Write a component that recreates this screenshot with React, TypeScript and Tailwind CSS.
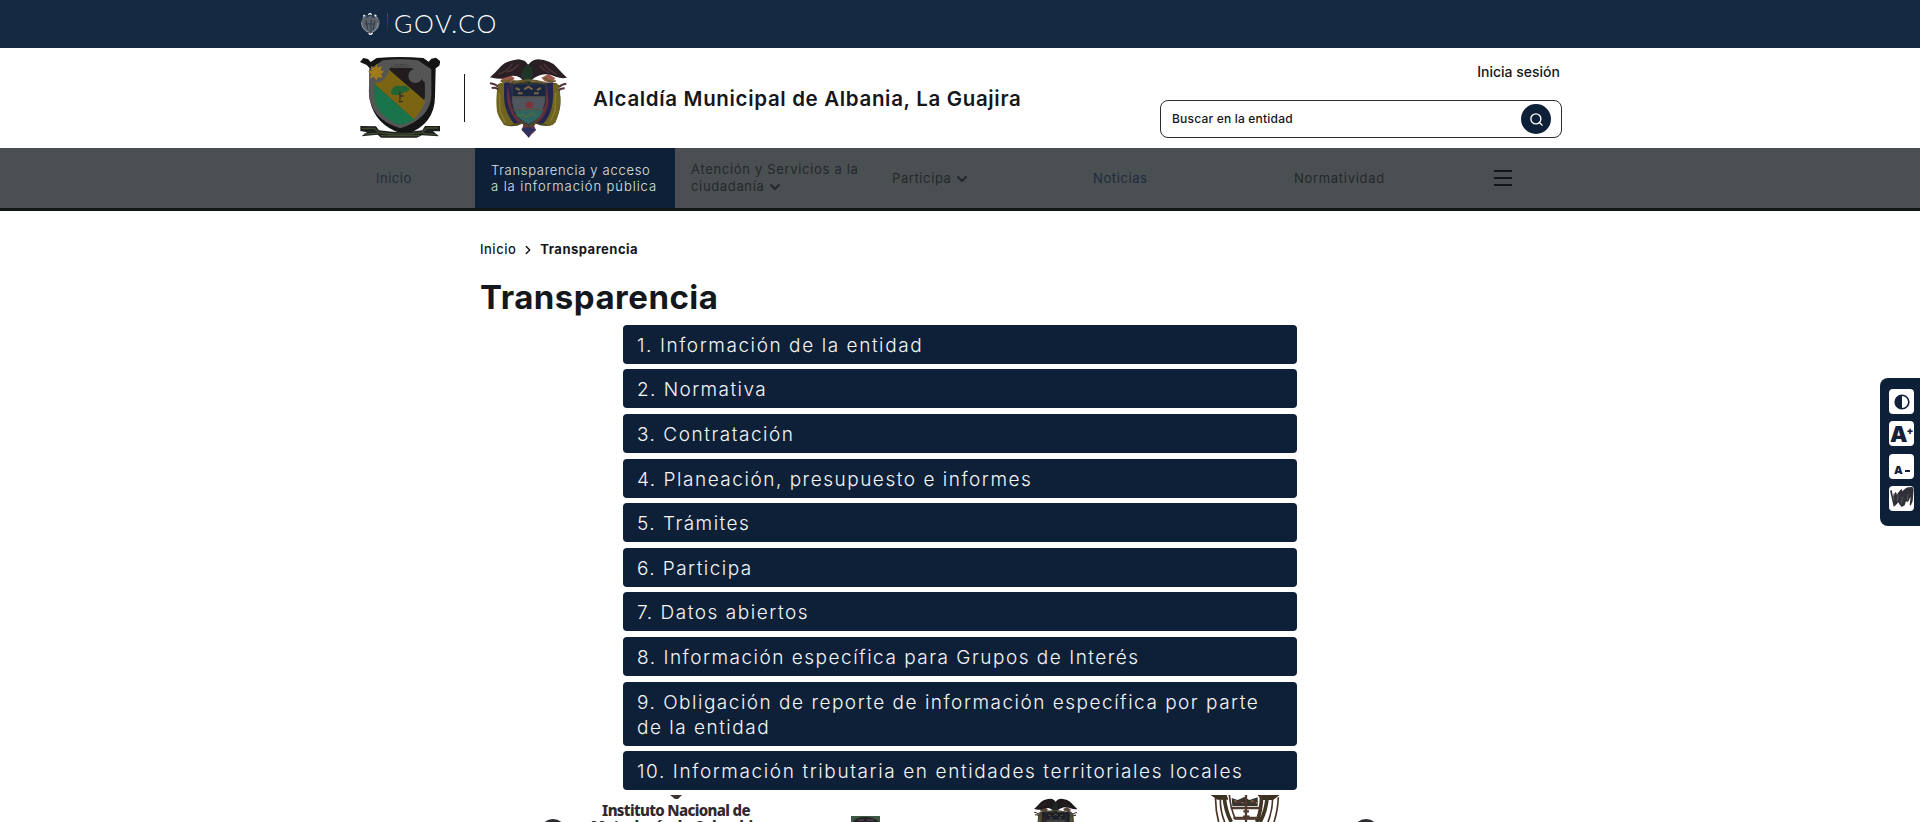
import { ChevronDown, ChevronRight, Search } from "lucide-react";

const sections = [
  { label: "1. Información de la entidad", tracking: "tracking-[1.57px]" },
  { label: "2. Normativa", tracking: "tracking-[1.42px]" },
  { label: "3. Contratación", tracking: "tracking-[1.52px]" },
  { label: "4. Planeación, presupuesto e informes", tracking: "tracking-[1.52px]" },
  { label: "5. Trámites", tracking: "tracking-[1.48px]" },
  { label: "6. Participa", tracking: "tracking-[1.45px]" },
  { label: "7. Datos abiertos", tracking: "tracking-[1.54px]" },
  { label: "8. Información específica para Grupos de Interés", tracking: "tracking-[1.5px]" },
  { label: "9. Obligación de reporte de información específica por parte de la entidad", tracking: "tracking-[1.5px]" },
  { label: "10. Información tributaria en entidades territoriales locales", tracking: "tracking-[1.6px]" },
];

function GovCrest() {
  return (
    <svg className="h-[22px] w-[20px]" viewBox="60 37 60 66" fill="none">
      <path d="M64 60c-2 20 8 32 27 38 20-6 29-18 28-38l-9-14-10 6-9-8-11 8-8-7z" fill="#5c626b" />
      <path d="M68 52c4-5 9-7 14-6m18 0c6-1 11 3 13 9M65 65c0 16 10 26 20 29m29-27c-1 14-8 23-18 28" stroke="#8f99a6" strokeWidth="3" />
      <path d="M78 58l5 28m10-30v38m12-34-6 28M75 70h30" stroke="#29384a" strokeWidth="3" />
      <path d="M85 42l5-4 5 4M70 47l4-4m30-1 5 5M86 98l6 4 6-5" stroke="#fff" strokeWidth="4" />
    </svg>
  );
}

function MunicipalShield() {
  return (
    <svg className="h-[81px] w-[80px]" viewBox="60 172 240 243">
      <path d="M60 187l10-12 14 3 8 9 18-12q70-6 140 0l16 11 8-9 14-3 13 11-3 13-11 8-2 84q0 84-86 115-80-19-104-84-12-32-7-64l1-51-9-10z" fill="#151515" />
      <path d="M89 211l40-27q52-7 103 0l42 27v77q-4 68-93 98-90-29-94-104z" fill="#555" />
      <path d="M104 212l36-25q44-5 83 0l36 24-5 13 1 65q-7 54-74 83-71-26-77-93z" fill="#211d1e" />
      <path d="M144 206q-5-2 112 98-7 24-34 56L103 253v-12q38-4 41-35" fill="#7b6513" />
      <path d="M103 253l121 107q-18 9-43 16-77-28-78-91z" fill="#19744b" />
      <path d="M87 209l42-27q53-6 105 0l40 27-7 40-15-2q-11-11-10-24-20-18-31-18h-62q-4 28-27 42l-32 5z" fill="#555" />
      <circle cx="226" cy="229" r="21" fill="#555" />
      <path d="M109 192l4 12 13-4-4 12 11 4-10 7 5 12-14-3-5 10-7-10-13 4 5-12-10-8 12-4-4-13 13 5z" fill="#a07b1d" />
      <path d="M163 194h38M153 201h54" stroke="#242424" strokeWidth="2" strokeDasharray="5 3" />
      <path d="M155 270q10-16 26-10 14-7 28 7-3 10-16 10-12 14-39 7-2-7 1-14" fill="#216333" />
      <path d="M180 276v26m-5 4h13m-7-17h10" stroke="#392f1c" strokeWidth="4" fill="none" />
      <path d="M61 379l47 1 9 12q65 11 130 0l8-13h45v16h-21l18 15-51-3-16 7H123l-10-9-49 5 17-12-20-4z" fill="#1c201d" />
      <path d="M66 386h37l14 13q66 9 129 0l14-14h35M73 403l40-2m136 0 41 4M122 408h118" fill="none" stroke="#414b30" strokeWidth="4" />
    </svg>
  );
}

function ColombiaCrest({ className }: { className: string }) {
  return (
    <svg className={className} viewBox="450 174 234 240">
      <path d="M480 250q-16 52 0 105l12 20q30 9 55-4l20 30 20-30q28 12 52 3 18-27 22-57 3-35-10-67l-45-4-86-5z" fill="#4e4a22" />
      <path d="M474 252l18-6 12 28-2 50 20 48-19 6q-23-12-32-43-5-43 3-83M639 252l18 2q12 65-11 114l-18 10-18-8 20-50z" fill="#6e641f" />
      <path d="M492 250l18-3 9 62q3 31 24 60l-22 1q-29-37-29-81M620 250l18-4q5 57-7 91-11 27-24 34l-17-1q24-35 27-65z" fill="#232750" />
      <path d="M503 252l8 51q5 39 34 64l-10 2q-31-33-34-78M620 253l-5 50q-5 37-28 63l7 2q28-24 32-65" fill="#66303a" />
      <path d="M515 251h102l-1 54q-7 48-50 69-44-18-51-67z" fill="#4f565f" stroke="#2a2d38" strokeWidth="3" />
      <path d="M517 253h98v36h-98z" fill="#1b2740" />
      <path d="M522 331h88q-10 28-44 41-33-13-44-41" fill="#2f6462" />
      <path d="M517 292h99M519 329h94" stroke="#5d5137" strokeWidth="3" />
      <path d="M527 264l12 6m14-2 12-8 12 8m14 2 12-6M534 280h14m34 0h14" fill="none" stroke="#7b6444" strokeWidth="6" />
      <path d="M556 312l9-8 15 4-3 17-18-2z" fill="#7c3238" />
      <path d="M530 348l16-4 13 8 15-13 14 9" stroke="#4a6c3e" strokeWidth="5" fill="none" />
      <path d="M480 233l24-12 20 13-10 15-24-6M604 233l22-11 20 13-12 14-20-5" fill="#9c5a4c" />
      <path d="M450 232q14-12 28-28 18-22 58-26 22 2 29 18 8-17 30-18 34 2 54 22 16 18 32 33-16 4-34-3-22-10-42-6-20 5-30 17-8 8-12 4-10 4-22-12-18-10-40-2-20 10-51 1" fill="#2a1f25" />
      <path d="M476 222q28-8 42-32m132 32q-24-10-38-30M500 216q22-4 36-24m92 26q-18-6-28-22" fill="none" stroke="#4f3437" strokeWidth="4" />
      <path d="M551 204l14-12 11 12 4 24-12 26-14-13-12-10z" fill="#1f3527" />
      <path d="M482 242q25 6 33-5m99-4q10 15 33 10M519 249q45-17 96 0" fill="none" stroke="#6e5a30" strokeWidth="6" />
      <path d="M450 250q16 2 24 10m-19 4q14-3 20 5m204-18q-15 2-22 10m17 4q-14 0-17 7" fill="none" stroke="#51343a" strokeWidth="6" />
      <path d="M551 371l15 11 14-10 8 19-13 12-9 10-9-10-12-12z" fill="#633743" />
      <path d="M544 386l22-5 22 8-16 9-5 15-10-11z" fill="#2f3260" />
      <path d="M478 280l3 57 15 30m151-88-2 55-13 29" fill="none" stroke="#8c7c33" strokeWidth="4" />
    </svg>
  );
}

function EngravedCrest() {
  return (
    <svg className="h-[27px] w-[72px] shrink-0" viewBox="0 0 216 81" fill="none">
      <path d="M2 0h48l5 14H22zM143 0h66l-20 15h-35z" fill="#3a3022" />
      <path d="M17 9q-1 36 9 72M31 10q-1 36 13 71M205 7q-2 42-13 74M188 9q0 36-14 72" stroke="#493225" strokeWidth="5" />
      <path d="M42 0q4 49 22 81M172 0q-3 49-22 81M155 0q-1 50-15 81" stroke="#3d3523" strokeWidth="11" />
      <path d="M58 0q4 41 18 72h66q13-30 14-72" stroke="#4b332c" strokeWidth="5" />
      <path d="M65 9l18 6 20-9 15 9 25-8v26H67z" fill="#39332e" />
      <path d="M74 21h19m26 0h24M62 39h89M70 69h76M108 0v81M100 49h17m-18 16h20" stroke="#513a30" strokeWidth="7" />
      <path d="M73 18h6m16 5h5m24-5h6m8 6h5" stroke="#ac8b70" strokeWidth="3" />
    </svg>
  );
}

export default function App() {
  return (
    <div className="flex h-[822px] w-full flex-col overflow-hidden bg-white font-['Inter','Liberation_Sans',sans-serif] text-[#14171c]">
      <div className="h-12 shrink-0 bg-[#142a42]">
        <div className="ml-[360px] flex h-full items-center">
          <GovCrest />
          <div className="ml-[7px] h-[22px] w-px bg-gradient-to-b from-[#4d5131] to-[#17243e]" />
          <span className="mb-[2px] ml-[6px] font-['Lato',sans-serif] text-[25px] leading-[30px] font-light tracking-[1.7px] text-white">GOV.CO</span>
        </div>
      </div>

      <header className="flex h-[100px] shrink-0 items-start pr-[358px] pl-[360px]">
        <div className="mt-[9px]"><MunicipalShield /></div>
        <div className="mt-[26px] ml-6 h-12 w-px bg-[#14171c]" />
        <div className="mt-[10px] ml-[25px]"><ColombiaCrest className="h-20 w-[78px]" /></div>
        <h2 className="mt-[37px] ml-[25px] text-[20.5px] leading-7 font-semibold tracking-[0.66px] whitespace-nowrap">Alcaldía Municipal de Albania, La Guajira</h2>
        <div className="ml-auto flex w-[402px] flex-col items-end">
          <a className="mt-[14px] mr-[2px] text-[14px] leading-5 font-medium">Inicia sesión</a>
          <div className="mt-[18px] flex h-[38px] w-full items-center justify-between rounded-lg border border-[#292c30] pr-[10px] pl-[11px]">
            <span className="text-[12px] font-medium tracking-[0.2px]">Buscar en la entidad</span>
            <span className="flex size-[30px] items-center justify-center rounded-full bg-[#0e2037]">
              <Search className="size-[15px] text-white" strokeWidth={2.2} />
            </span>
          </div>
        </div>
      </header>

      <nav className="flex h-[63px] shrink-0 border-b-[3px] border-[#131617] bg-[#4a5052] pl-[360px] text-[13px] leading-4 text-[#24282b]">
        <a className="flex w-[115px] items-center pl-4 tracking-[0.5px] text-[#222c3c]">Inicio</a>
        <a className="flex w-[200px] items-center bg-[#0e2037] pl-4 font-light whitespace-nowrap text-[#dfe6ea]">
          <span>
            <span className="block tracking-[0.7px]">Transparencia y acceso</span>
            <span className="block tracking-[0.93px]">a la información pública</span>
          </span>
        </a>
        <a className="flex w-[200px] items-center pl-4 whitespace-nowrap">
          <span>
            <span className="block tracking-[0.68px]">Atención y Servicios a la</span>
            <span className="flex items-center gap-[3px]"><span className="tracking-[0.65px]">ciudadanía</span> <ChevronDown className="mt-0.5 size-4" strokeWidth={3} /></span>
          </span>
        </a>
        <a className="flex w-[200px] items-center gap-[3px] pl-[17px]"><span className="tracking-[0.6px]">Participa</span> <ChevronDown className="mt-0.5 size-4" strokeWidth={3} /></a>
        <a className="flex w-[200px] items-center pl-[18px] tracking-[0.6px] text-[#1d2a40]">Noticias</a>
        <a className="flex w-[200px] items-center pl-[19px] tracking-[0.7px]">Normatividad</a>
        <button className="flex w-[56px] flex-col justify-center gap-[5px] pl-[19px]" aria-label="Menú">
          <span className="h-0.5 w-[18px] bg-[#101518]" />
          <span className="h-0.5 w-[18px] bg-[#101518]" />
          <span className="h-0.5 w-[18px] bg-[#101518]" />
        </button>
      </nav>

      <main className="flex shrink-0 flex-col pl-[480px]">
        <div className="mt-[29px] flex h-5 items-center text-[13px]">
          <a className="font-medium tracking-[0.5px]">Inicio</a>
          <ChevronRight className="mr-[5px] ml-[5px] size-[14px]" strokeWidth={2.5} />
          <span className="font-bold tracking-[0.5px]">Transparencia</span>
        </div>
        <h1 className="mt-[17px] h-[47.8px] text-[33px] leading-[40px] font-bold tracking-[0.5px]">Transparencia</h1>
        <ol className="ml-[143px] flex w-[674px] flex-col gap-[5.6px]">
          {sections.map((s) => (
            <li key={s.label} className="rounded bg-[#0e2037] px-[14px] pt-[8px] pb-[6px]">
              <a className={`block text-[19px] leading-[25px] font-light text-[#f4f6f8] ${s.tracking}`}>{s.label}</a>
            </li>
          ))}
        </ol>
      </main>

      {/* Entity carousel, partly below the fold */}
      <footer className="absolute top-[795px] left-0 flex h-[27px] w-full items-start overflow-hidden text-[#2f2830]">
        <span className="mt-6 ml-[540px] size-[26px] shrink-0 rounded-full bg-[#2a2c2f]" />
        <div className="ml-[16px] flex w-[188px] shrink-0 flex-col items-center font-['Noto_Sans',sans-serif] text-[15px] leading-[16px] font-extrabold whitespace-nowrap">
          <svg className="h-1 w-3 shrink-0" viewBox="0 0 12 4"><path d="M0 0h12L8 4H5z" fill="#3b3634" /></svg>
          <span className="mt-[3px] tracking-[-0.65px]">Instituto Nacional de</span>
          <span className="tracking-[-0.5px]">Metrología de Colombia</span>
        </div>
        <svg className="mt-[21px] ml-[81px] h-[6px] w-[29px] shrink-0" viewBox="0 0 29 6">
          <path d="M0 0h29v6H0z" fill="#3e5942" />
          <path d="M2 6q3-5 12-5t14 5" fill="#252127" />
          <path d="M7 4h6m3 0h7" stroke="#5d5260" />
        </svg>
        <div className="mt-[3px] ml-[154px] h-[24px] w-[44px] shrink-0 overflow-hidden"><ColombiaCrest className="h-[45px] w-[44px] brightness-75 saturate-50" /></div>
        <div className="ml-[132px] shrink-0"><EngravedCrest /></div>
        <span className="mt-6 ml-[71px] size-[26px] shrink-0 rounded-full bg-[#2a2c2f]" />
      </footer>

      <aside className="absolute top-[378px] right-0 flex h-[148px] w-10 flex-col items-center gap-[7.4px] rounded-l-lg bg-[#0e2037] pt-[11px] pl-[3px] text-[#14203a]">
        <button className="flex size-[25px] items-center justify-center rounded bg-white" aria-label="Contraste">
          <svg className="size-4" viewBox="0 0 16 16"><circle cx="8" cy="8" r="6.8" fill="none" stroke="currentColor" strokeWidth="1.6" /><path d="M8 1a7 7 0 0 0 0 14z" fill="currentColor" /></svg>
        </button>
        <button className="flex size-[25px] items-center rounded bg-white pl-px leading-none">
          <span className="text-[22px] font-black">A</span><span className="-mt-2 -ml-px text-[10px] font-black">+</span>
        </button>
        <button className="flex size-[25px] items-end gap-0.5 rounded bg-white pb-[4px] pl-[5px] leading-none">
          <span className="text-[11px] leading-[10px] font-black">A</span><span className="mb-[3px] h-[1.5px] w-[5px] bg-[#14203a]" />
        </button>
        <button className="flex size-[25px] items-center justify-center rounded bg-white" aria-label="Centro de relevo">
          <svg className="size-[25px]" viewBox="0 0 75 75" fill="#303138">
            <path d="M3 14l5-2 4 20 7-14 4 3-1 6 9-11 7-8 2 8 8-8 8-4 14-1 4 7-3 36-6 13-3-3 3-24-8 16-6-2-4 12-9 5-7-8-3-6-8 9-6 4z" />
            <path d="M13 22l1 20m14-18-3 22m17-14-6 20m22-28-3 17" stroke="#6e6f76" strokeWidth="2" fill="none" />
          </svg>
        </button>
      </aside>
    </div>
  );
}
